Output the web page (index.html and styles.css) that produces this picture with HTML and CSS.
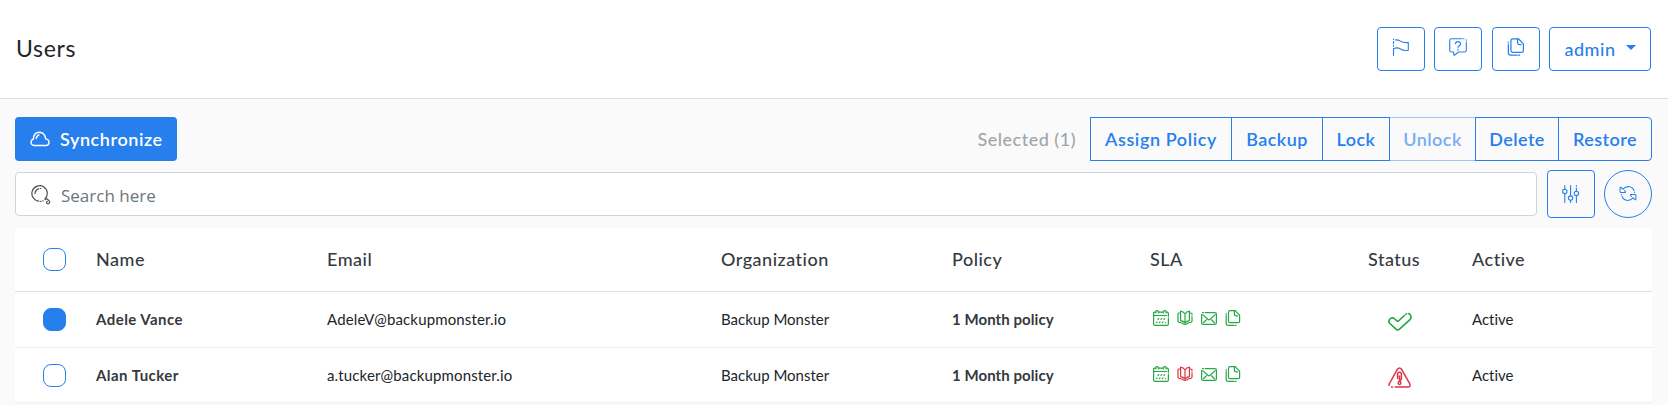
FILE: index.html
```html
<!DOCTYPE html>
<html lang="en">
<head>
<meta charset="utf-8">
<title>Users</title>
<link rel="stylesheet" href="styles.css">
</head>
<body>
<svg class="defs" width="0" height="0" aria-hidden="true">
  <symbol id="calendar" viewBox="0 0 16 16">
    <path d="M2.6 2.2H1.8Q.6 2.2.6 3.4V14Q.6 15.4 2 15.4H14Q15.4 15.4 15.4 14V8M15.4 6.3V3.4Q15.4 2.2 14.2 2.2H13.4M5.6 2.2H10.4M.6 5.5H13.6"/>
    <path d="M2.8 2.9V1.6Q2.8.6 4.1.6T5.4 1.6V2.9M10.6 2.9V1.6Q10.6.6 11.9.6T13.2 1.6V2.9"/>
    <path d="M5 9.400L5.600 8.600M8 9.400L8.600 8.600M11 9.400L11.600 8.600M3.400 12.600L4 11.800M6.400 12.600L7 11.800M9.400 12.600L10 11.800M12.400 12.600H12.600"/>
  </symbol>
  <symbol id="book" viewBox="0 0 16 16">
    <path d="M8 4V13.200M8 4Q6.500 1.400 3.600 1.200V10.600Q6.500 10.800 8 13.200Q9.500 10.800 12.400 10.600V1.200Q9.500 1.400 8 4"/>
    <path d="M3.400 3H2Q1 3 1 4V11Q1 12.200 2.200 12.300Q4.600 12.400 6 13.700Q8 15 10 13.700Q11.400 12.400 13.800 12.300Q15 12.200 15 11V6.500M15 4.800V4Q15 3 14 3H12.600"/>
  </symbol>
  <symbol id="mail" viewBox="0 0 16 16">
    <path d="M.6 4.500V12.800Q.6 14.400 2.200 14.400H13.800Q15.400 14.400 15.400 12.800V4.200Q15.400 2.600 13.800 2.600H4.200M2.600 2.600H1.400"/>
    <path d="M1.800 4.600L6.800 9.300Q8 10.300 9.200 9.300L14.200 4.600M2.500 12.700L5.300 10M13.500 12.700L10.700 10"/>
  </symbol>
  <symbol id="copy" viewBox="0 0 16 16">
    <path d="M5 .7H10.200L14.600 5.200V11.200Q14.600 12.700 13.100 12.700H5Q3.500 12.700 3.500 11.200V2.200Q3.500.7 5 .7Z"/>
    <path d="M9.400 1V4.200Q9.400 5.800 11 5.800H12.600M1.200 5.600V13.200Q1.200 15.300 3.300 15.300H8.800M10.100 15.300H11.200M1.200 3.600V4.200"/>
  </symbol>
</svg>

<header class="topbar">
  <h1 class="title">Users</h1>
  <nav class="top-actions">
    <button class="btn icon-btn" aria-label="Flag"><svg class="icon" viewBox="0 0 18 18"><path d="M1.500 17.500V10.800Q5 8.800 8.500 11Q12 13.200 16.300 12.200V4.400Q12 5.300 8.500 3.100Q6 1.600 3.200 2M1.500 1V1.500M1.500 3.500V5.800M1.500 7.500V8.300"/></svg></button>
    <button class="btn icon-btn" aria-label="Help"><svg class="icon" viewBox="0 0 18 18"><path d="M12.500.7H2.500Q.7.7.7 2.500V12.200Q.7 14 2.500 14H4.700V16.800Q4.900 17.600 5.700 17L9.500 14H15.500Q17.300 14 17.300 12.200V4M17.300 2.300V1.700M14 .7H15"/><path d="M6.400 5.800Q6.600 3.600 9 3.600T11.600 5.800Q11.600 7 10.200 7.800Q9 8.500 9 9.700M9 11.300V12.200"/></svg></button>
    <button class="btn icon-btn" aria-label="Copy"><svg class="icon"><use href="#copy"/></svg></button>
    <button class="btn admin">admin<span class="caret"></span></button>
  </nav>
</header>

<main class="content">
  <div class="toolbar">
    <button class="sync"><svg class="cloud" viewBox="0 0 20 16"><path d="M5.500 14.500H15.700Q19 14.300 19 11.200Q18.800 8.200 15.700 7.900Q14.800 1.500 9.400 1.300Q4.300 1.500 3.500 6.500V8.200Q1 9 1 11.500Q1.200 14.300 4 14.500H5.500M6.300 7.500Q6.400 4.700 9 4"/></svg>Synchronize</button>
    <div class="selection">
      <span class="selected">Selected (1)</span>
      <div class="group">
        <button class="seg assign">Assign Policy</button>
        <button class="seg backup">Backup</button>
        <button class="seg lock">Lock</button>
        <button class="seg unlock" disabled>Unlock</button>
        <button class="seg delete">Delete</button>
        <button class="seg restore">Restore</button>
      </div>
    </div>
  </div>

  <div class="searchbar">
    <div class="search">
      <svg class="search-icon" viewBox="0 0 20 20"><path d="M13.800 14.100A7.700 7.700 0 1 0 7.800 16.100M9.500 16.300H10M11.800 15.800H12.200"/><path d="M4 8.500Q4.200 5 7.600 3.900M9.200 3.500H9.800"/><path d="M14.500 14.500Q15.600 13 17 14.700L18.500 16.400Q19.200 17.500 18 18.500Q16.800 19.200 15.900 18.300Q15 17.200 16.300 16.300"/></svg>
      <span class="placeholder">Search here</span>
    </div>
    <button class="btn square" aria-label="Filters"><svg class="icon" viewBox="0 0 18 18"><path d="M2.800.6V4M2.800 8.800V17.500M8.600.6V10.800M8.600 15.400V17.500M14.400.6V1.200M14.400 3V6M14.400 10.800V17.500"/><circle cx="2.800" cy="6.400" r="2.200"/><circle cx="8.600" cy="13.100" r="2.200"/><circle cx="14.400" cy="8.400" r="2.200"/></svg></button>
    <button class="btn square round" aria-label="Refresh"><svg class="icon" viewBox="0 0 18 18"><path d="M3.600 4.300Q5.800 1.700 9.500 1.700Q13.800 2.100 15.300 5.800M16 7.300V7.900M14.400 13.700Q12.200 16.300 8.500 16.300Q4.200 15.900 2.700 12.200M2.200 10.500V10.100"/><path d="M3.600 4.300L1.600 2.500Q.6 2 .6 3.200V7.200Q.7 8 1.500 8H5.800Q6.900 7.800 6.100 6.800L5.400 6M14.400 13.700L16.400 15.500Q17.400 16 17.400 14.800V10.800Q17.300 10 16.500 10H12.200Q11.100 10.200 11.900 11.200L12.600 12"/></svg></button>
  </div>

  <section class="table">
    <div class="row head">
      <span class="check"></span><span>Name</span><span>Email</span><span>Organization</span><span>Policy</span><span>SLA</span><span>Status</span><span>Active</span>
    </div>
    <div class="row">
      <span class="check checked"></span><span class="strong">Adele Vance</span><span class="email">AdeleV@backupmonster.io</span><span>Backup Monster</span><span class="strong policy">1 Month policy</span>
      <span class="sla"><svg><use href="#calendar"/></svg><svg><use href="#book"/></svg><svg><use href="#mail"/></svg><svg><use href="#copy"/></svg></span>
      <span class="status"><svg class="ok" viewBox="0 0 24 19"><path d="M16.300 3.500L10.500 9Q9.700 9.600 8.900 9L6.800 7Q4.300 4.600 1.900 7Q-.2 9.300 1.900 11.500L8 17.200Q9.800 18.700 11.500 17.200L22 7.600Q23.600 5.800 22.700 3.500Q22 1.700 20.500 1.500M17.900 2.200L18.200 2"/></svg></span>
      <span>Active</span>
    </div>
    <div class="row">
      <span class="check"></span><span class="strong">Alan Tucker</span><span class="email">a.tucker@backupmonster.io</span><span>Backup Monster</span><span class="strong policy">1 Month policy</span>
      <span class="sla"><svg><use href="#calendar"/></svg><svg class="bad"><use href="#book"/></svg><svg><use href="#mail"/></svg><svg><use href="#copy"/></svg></span>
      <span class="status"><svg class="warn" viewBox="0 0 23 21"><path d="M1 18.300Q.9 17.500 1.500 16.500L9.300 2.300Q11.500-.4 13.600 2.300L21.700 16.700Q22.900 19.700 19.800 20H7.200M3.500 20H4.500"/><path d="M9.600 11.500V6.900Q9.700 5.200 11.500 5.200T13.400 6.900V11.500Q13.300 13.300 11.500 13.500V9"/><circle cx="11.500" cy="16" r="1.400"/></svg></span>
      <span>Active</span>
    </div>
  </section>
</main>
</body>
</html>
```
FILE: styles.css
```css
* { box-sizing: border-box; }
html, body { margin: 0; height: 100%; overflow: hidden; }
body {
  display: flex;
  flex-direction: column;
  background: #fafafa;
  color: #212529;
  font-family: Lato, "Liberation Sans", sans-serif;
  font-variant-ligatures: none;
}
button { font: inherit; margin: 0; padding: 0; letter-spacing: inherit; }
svg { display: block; flex: none; fill: none; stroke: currentColor; stroke-linecap: round; stroke-linejoin: round; }
.defs { position: absolute; }

.topbar {
  flex: none;
  display: flex;
  justify-content: space-between;
  height: 99px;
  padding: 27px 17px 0 16px;
  background: #fff;
  border-bottom: 1px solid #dcdee0;
}
.title { margin: 0; padding-top: 4px; font-size: 23px; line-height: 34px; font-weight: 400; letter-spacing: .7px; }
.top-actions { display: flex; gap: 9.500px; }
.btn {
  display: flex;
  align-items: center;
  justify-content: center;
  background: transparent;
  border: 1px solid #267fed;
  border-radius: 4px;
  color: #267fed;
}
.icon-btn { width: 48px; height: 44px; padding-bottom: 4px; }
.icon { width: 18px; height: 18px; stroke-width: 1.1; }
.admin { width: 102px; height: 44px; padding-bottom: 1px; gap: 10px; font-size: 18px; font-weight: 500; letter-spacing: .55px; }
.caret { border: 5.500px solid transparent; border-top-color: currentColor; border-bottom: 0; margin-top: -2px; }

.content { padding: 18px 16px 0 15px; }
.toolbar { display: flex; justify-content: space-between; height: 44px; }
.sync {
  display: flex;
  align-items: center;
  width: 162px;
  height: 44px;
  padding-left: 15px;
  border: 0;
  border-radius: 4px;
  background: #267fed;
  color: #fff;
  font-size: 18px;
  font-weight: 600;
  letter-spacing: .58px;
}
.cloud { width: 20px; height: 16px; margin-right: 10px; stroke-width: 1.400; }
.selection { display: flex; align-items: center; gap: 14px; font-size: 18px; }
.selected { color: #a0a5aa; font-weight: 500; letter-spacing: .5px; }
.group { display: flex; height: 44px; font-weight: 600; letter-spacing: .45px; }
.seg { height: 44px; background: transparent; color: #267fed; border: 1px solid #267fed; margin-left: -1px; }
.assign { width: 142px; margin-left: 0; letter-spacing: .6px; }
.backup { width: 92px; }
.lock { width: 68px; }
.unlock { width: 87px; color: #75adf3; border-color: #a0c6f6; }
.delete { width: 84px; }
.restore { width: 94px; border-radius: 0 4px 4px 0; }
/* The enabled neighbours' borders stay above the faded one. */
.lock, .delete { position: relative; }

.searchbar { display: flex; align-items: center; height: 48px; margin-top: 9px; }
.search {
  flex: 1;
  display: flex;
  align-items: center;
  height: 44px;
  padding: 1px 0 0 15px;
  background: #fff;
  border: 1px solid #ced4da;
  border-radius: 4px;
}
.search-icon { width: 20px; height: 20px; color: #495057; stroke-width: 1.200; }
.placeholder { margin-left: 10px; padding-top: 1px; color: #6c757d; font: 17px "Open Sans", "Noto Sans", sans-serif; }
.square { width: 48px; height: 48px; margin-left: 10px; }
.round { margin-left: 9px; padding-bottom: 1px; border-radius: 50%; }
.round .icon { height: 17px; }

.table { margin-top: 10px; background: #fff; border-radius: 4px; }
.row {
  display: grid;
  grid-template-columns: 53px 231px 394px 231px 198px 218px 104px 1fr;
  align-items: center;
  height: 56px;
  padding: 0 0 1px 28px;
  border-bottom: 1px solid #eeeff0;
  font-size: 15px;
}
.row:last-child { height: 55px; padding-bottom: 0; }
.head { height: 64px; border-color: #dcdee0; color: #343a40; font-size: 18px; font-weight: 500; letter-spacing: .5px; padding-bottom: 2px; }
.check { width: 23px; height: 23px; border: 1px solid #267fed; border-radius: 8px; }
.head .check { margin-top: 2px; }
.checked { background: #267fed; }
.strong { color: #343a40; font-weight: 700; letter-spacing: .45px; }
.policy { letter-spacing: .07px; }
.email { letter-spacing: .14px; }
.sla { display: flex; gap: 8px; padding: 0 0 3px 3px; color: #28a745; }
.sla svg { width: 16px; height: 16px; stroke-width: 1.200; }
.sla .bad { color: #dc3545; }
.status { padding: 5px 0 0 20px; }
.ok { width: 24px; height: 19px; color: #28a745; stroke-width: 1.700; }
.warn { width: 23px; height: 21px; color: #dc3545; stroke-width: 1.500; }
```
